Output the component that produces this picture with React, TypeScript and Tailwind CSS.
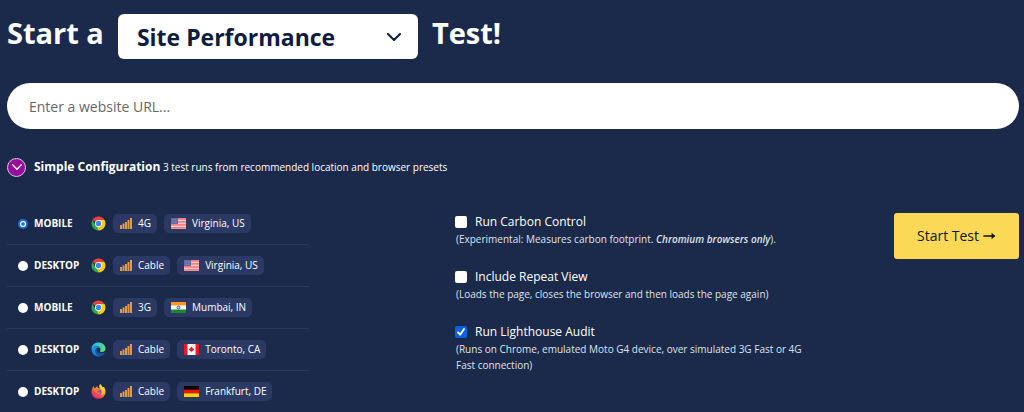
import { useState } from 'react'
import type { ReactNode } from 'react'

type Browser = 'chrome' | 'edge' | 'firefox'
type Country = 'us' | 'in' | 'ca' | 'de'

interface Preset {
  id: string
  device: string
  browser: Browser
  speed: string
  country: Country
  location: string
}

const presets: Preset[] = [
  { id: 'mobile-us', device: 'Mobile', browser: 'chrome', speed: '4G', country: 'us', location: 'Virginia, US' },
  { id: 'desktop-us', device: 'Desktop', browser: 'chrome', speed: 'Cable', country: 'us', location: 'Virginia, US' },
  { id: 'mobile-in', device: 'Mobile', browser: 'chrome', speed: '3G', country: 'in', location: 'Mumbai, IN' },
  { id: 'desktop-ca', device: 'Desktop', browser: 'edge', speed: 'Cable', country: 'ca', location: 'Toronto, CA' },
  { id: 'desktop-de', device: 'Desktop', browser: 'firefox', speed: 'Cable', country: 'de', location: 'Frankfurt, DE' },
]

function Chevron({ className }: { className: string }) {
  return (
    <svg viewBox="0 0 14 8" className={className} fill="none" stroke="currentColor" strokeWidth="2" strokeLinecap="round" strokeLinejoin="round">
      <path d="M1 1l6 6 6-6" />
    </svg>
  )
}

function BrowserIcon({ browser }: { browser: Browser }) {
  if (browser === 'edge') {
    return (
      <svg viewBox="0 0 30 30" className="size-[15px] shrink-0" aria-label="Edge">
        <defs>
          <linearGradient id="edge-top" x1="0" y1="0.3" x2="1" y2="0.5">
            <stop offset="0" stopColor="#2fb4f0" />
            <stop offset="0.5" stopColor="#36c9c6" />
            <stop offset="1" stopColor="#62e06a" />
          </linearGradient>
          <linearGradient id="edge-left" x1="0" y1="0" x2="0.6" y2="1">
            <stop offset="0" stopColor="#1a9be6" />
            <stop offset="1" stopColor="#1478d8" />
          </linearGradient>
        </defs>
        <path d="M1 14C1 6 7.500 1 15 1c8 0 14 5.500 14 12 0 4-3 7-7 7-3 0-4.500-1-4-2.500.500-1 1-1.500 1-3C19 11 15.500 8.500 11 8.500 6 8.500 2 11 1 14z" fill="url(#edge-top)" />
        <path d="M1 14c1-3.500 5-5.500 9-5.500 5 0 9 2.500 9 6 0-2-2-3.500-4-3.500-3.500 0-6 3.500-6 7 0 5 4 9.500 10 10.400C17.500 29 16 29 15 29 7 29 1 22.500 1 14z" fill="url(#edge-left)" />
        <path d="M11.500 13C9.500 14.500 9 16.500 9 18.500c0 5 4 9.500 9.500 10 4-.700 7-3.200 8.800-6 .400-.800-.300-1.200-1-.800-1.300.600-2.800 1-4.800 1-5.500 0-10-3-10-9.700z" fill="#1656a8" />
      </svg>
    )
  }
  if (browser === 'firefox') {
    return (
      <svg viewBox="0 0 30 30" className="size-[15px] shrink-0" aria-label="Firefox">
        <defs>
          <linearGradient id="fox-body" x1="0.85" y1="0.1" x2="0.2" y2="0.95">
            <stop offset="0" stopColor="#fff04a" />
            <stop offset="0.4" stopColor="#ff9a1f" />
            <stop offset="0.75" stopColor="#ff3f4e" />
            <stop offset="1" stopColor="#e9267c" />
          </linearGradient>
        </defs>
        <path d="M18 0c3 2 4.500 4.500 5 7 2-.200 2.500-1.500 2.500-1.500C28 8.500 29 12 29 15.500 29 23 23 29.500 15 29.500S1 23.500 1 16c0-4.500 1.800-7.500 3-9.500L5.500 4l1.200 4 3-.300C10.500 6 12 5 13.500 4.500L13 8c2 0 3.500.500 4.500 1.500C16 6 16 3 18 0z" fill="url(#fox-body)" />
        <circle cx="15.500" cy="16" r="5.500" fill="#8a48dd" />
        <path d="M5 10c3-1.500 6-1 8 1l4 .500c-.500 2-2.500 2.500-4 3-.800.300-.500 1.500-.500 2 1.500 1 3.500 0 5.500.500 1.500.500.500 2-1 2.500-2 .800-4.500.500-6.500-1C8 16 6 13 5 10z" fill="#ff7a2a" />
        <path d="M18 1c-1 4 1 6.500 3.500 9.500s2.500 8-1.500 11c4-.500 7-4 6.500-9C26 8 21 5.500 18 1z" fill="#ffd83b" />
      </svg>
    )
  }
  return (
    <svg viewBox="0 0 30 30" className="size-[15px] shrink-0" aria-label="Chrome">
      <path d="M15 15L2.900 8A14 14 0 0 1 27.100 8z" fill="#ea4335" />
      <path d="M15 8h12.100A14 14 0 0 1 15 29l6.100-10.500z" fill="#fbce16" />
      <path d="M2.900 8l6 10.500L15 22l-.100 7A14 14 0 0 1 2.900 8z" fill="#2da94f" />
      <path d="M15 29l6.100-10.500L15 21l-3 0z" fill="#fbce16" />
      <circle cx="15" cy="15" r="7" fill="#fff" />
      <circle cx="15" cy="15" r="5.400" fill="#4285e8" />
    </svg>
  )
}

function SignalIcon() {
  return (
    <svg viewBox="0 0 12 11" className="h-[11px] w-3 shrink-0" fill="#dc9c4b">
      <rect x="0" y="7" width="2" height="4" />
      <rect x="2.500" y="5.500" width="2" height="5.500" />
      <rect x="5" y="4" width="2" height="7" />
      <rect x="7.500" y="2" width="2" height="9" />
      <rect x="10" y="0" width="2" height="11" />
    </svg>
  )
}

function Flag({ country }: { country: Country }) {
  return (
    <svg viewBox="0 0 30 22" className="h-[11px] w-[15px] shrink-0">
      {country === 'us' && (
        <>
          <rect width="30" height="22" fill="#ffcccc" />
          {[0, 6, 12, 18].map((y) => (
            <rect key={y} y={y} width="30" height="3.500" fill="#f37f84" />
          ))}
          <rect width="14" height="12" fill="#66699f" />
          <path d="M2 3h10M2 6h10M2 9h10" stroke="#a3a5cb" strokeDasharray="1.500 1.500" />
        </>
      )}
      {country === 'in' && (
        <>
          <rect width="30" height="22" fill="#fff" />
          <rect width="30" height="7" fill="#ff9a1f" />
          <rect y="15" width="30" height="7" fill="#168a2c" />
          <circle cx="15" cy="11" r="3" fill="#c9cdf0" stroke="#2b348f" strokeWidth="1.500" />
        </>
      )}
      {country === 'ca' && (
        <>
          <rect width="30" height="22" fill="#fff" />
          <rect width="7" height="22" fill="#ee1620" />
          <rect x="23" width="7" height="22" fill="#ee1620" />
          <path d="M15 5l1.500 2.500 1.500-.500-.500 3 2.500-1v2.500L17 14.500h-1.500V17h-1v-2.500H13l-3-3V9l2.500 1-.500-3 1.500.500z" fill="#ee1620" />
        </>
      )}
      {country === 'de' && (
        <>
          <rect width="30" height="22" fill="#070707" />
          <rect y="7.300" width="30" height="7.400" fill="#ec1010" />
          <rect y="14.600" width="30" height="7.400" fill="#ffd000" />
        </>
      )}
    </svg>
  )
}

function Tag({ icon, children }: { icon: ReactNode; children: ReactNode }) {
  return (
    <span className="flex h-[19px] items-center gap-1.5 rounded-[5px] bg-[#2a3a64] pr-1.5 pl-[7px] text-[10px] whitespace-nowrap">
      {icon}
      {children}
    </span>
  )
}

function PresetRow({ preset, checked, onSelect }: { preset: Preset; checked: boolean; onSelect: () => void }) {
  return (
    <li className="border-b border-[#2a3a5e] last:border-0">
      <label className="flex h-[41px] items-center pl-[11px]">
        <input
          type="radio"
          name="preset"
          checked={checked}
          onChange={onSelect}
          className="mt-px size-2.5 shrink-0 appearance-none rounded-full bg-white checked:border-2 checked:border-[#1a6fe0] checked:bg-radial checked:from-[#1a6fe0] checked:from-30% checked:to-white checked:to-55%"
        />
        <span className="ml-1.5 w-14 text-[10px] font-bold uppercase">{preset.device}</span>
        <span className="mr-[7px] ml-px">
          <BrowserIcon browser={preset.browser} />
        </span>
        <span className="flex gap-[7px]">
          <Tag icon={<SignalIcon />}>{preset.speed}</Tag>
          <Tag icon={<Flag country={preset.country} />}>{preset.location}</Tag>
        </span>
      </label>
    </li>
  )
}

function Option({ id, title, defaultChecked, children }: { id: string; title: string; defaultChecked?: boolean; children: ReactNode }) {
  return (
    <div>
      <div className="flex h-[18px] items-center gap-2">
        <span className="relative flex">
          <input
            id={id}
            type="checkbox"
            defaultChecked={defaultChecked}
            className="peer size-3 appearance-none rounded-xs bg-white checked:bg-[#0b62dd]"
          />
          <svg viewBox="0 0 12 12" className="pointer-events-none absolute inset-0 hidden size-3 peer-checked:block" fill="none" stroke="#fff" strokeWidth="1.800" strokeLinecap="round" strokeLinejoin="round">
            <path d="M3 6.300l2.200 2.400L9 3" />
          </svg>
        </span>
        <label htmlFor={id} className="text-xs">
          {title}
        </label>
      </div>
      <p className="pl-px text-[10px] leading-4 text-[#dfe3ee]">{children}</p>
    </div>
  )
}

export default function App() {
  const [selected, setSelected] = useState('mobile-us')

  return (
    <form
      onSubmit={(e) => e.preventDefault()}
      className="min-h-screen bg-[#1b2a4a] pt-3.5 pr-[5px] pl-[7px] font-['Open_Sans',sans-serif] text-white"
    >
      <h1 className="flex items-center gap-3.5 text-[29px] leading-9 font-bold">
        <span className="pb-2">Start a</span>
        <span className="relative w-[300px]">
          <select
            aria-label="Test type"
            className="block h-[45px] w-full appearance-none rounded-md bg-white pl-[19px] text-[23px] font-bold text-[#0e1c40]"
          >
            <option>Site Performance</option>
            <option>Core Web Vitals</option>
            <option>Lighthouse</option>
          </select>
          <Chevron className="pointer-events-none absolute top-[19px] right-[17px] h-2 w-3.5 text-[#0e1c40]" />
        </span>
        <span className="pb-2">Test!</span>
      </h1>

      <input
        type="text"
        aria-label="Website URL"
        placeholder="Enter a website URL..."
        className="mt-6 block h-[46px] w-full rounded-full bg-white px-[22px] text-sm text-gray-800 placeholder:text-[#666]"
      />

      <div className="mt-7 flex h-5 items-center">
        <button type="button" aria-label="Toggle configuration" className="flex size-[19px] items-center justify-center rounded-full border border-[#dcc4e6] bg-[#970b9d]">
          <Chevron className="h-1.5 w-2.5" />
        </button>
        <p className="ml-2 text-[10px]">
          <strong className="text-xs">Simple Configuration</strong> 3 test runs from recommended location and browser presets
        </p>
      </div>

      <div className="mt-[26px] grid grid-cols-[448fr_439fr_125px]">
        <ul className="w-[302px]">
          {presets.map((preset) => (
            <PresetRow key={preset.id} preset={preset} checked={selected === preset.id} onSelect={() => setSelected(preset.id)} />
          ))}
        </ul>

        <div className="flex max-w-[350px] flex-col gap-[21px] pt-2.5">
          <Option id="carbon" title="Run Carbon Control">
            (Experimental: Measures carbon footprint. <em className="font-semibold">Chromium browsers only</em>).
          </Option>
          <Option id="repeat" title="Include Repeat View">
            (Loads the page, closes the browser and then loads the page again)
          </Option>
          <Option id="lighthouse" title="Run Lighthouse Audit" defaultChecked>
            (Runs on Chrome, emulated Moto G4 device, over simulated 3G Fast or 4G Fast connection)
          </Option>
        </div>

        <button type="submit" className="mt-2.5 flex h-[46px] items-center justify-center gap-1 rounded-[3px] bg-[#fbd957] text-sm text-[#111]">
          Start Test
          <svg viewBox="0 0 13 8" className="h-2 w-[13px]" fill="none" stroke="currentColor" strokeWidth="1.500" strokeLinecap="round">
            <path d="M1 4h10" />
            <path d="M9 1.500L12 4 9 6.500z" fill="currentColor" strokeWidth="0.500" />
          </svg>
        </button>
      </div>
    </form>
  )
}
